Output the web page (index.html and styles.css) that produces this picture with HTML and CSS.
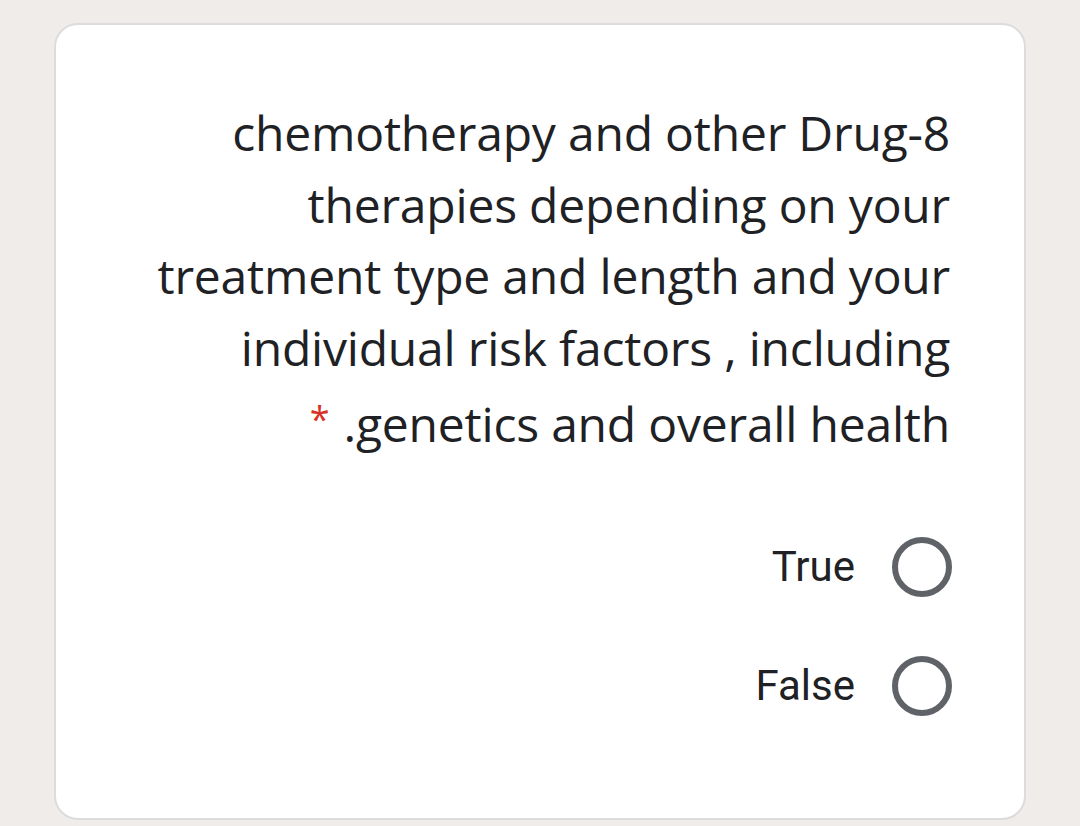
FILE: index.html
```html
<!DOCTYPE html>
<html lang="en">
<head>
<meta charset="utf-8">
<link rel="stylesheet" href="styles.css">
</head>
<body>
<div class="card">
  <div class="question">
    chemotherapy and other Drug-8<br>
    therapies depending on your<br>
    treatment type and length and your<br>
    individual risk factors , including<br>
    <span class="req">*</span> .genetics and overall health
  </div>
  <div class="options">
    <label class="option"><span class="label">True</span><span class="radio"></span></label>
    <label class="option"><span class="label">False</span><span class="radio"></span></label>
  </div>
</div>
</body>
</html>
```

FILE: styles.css
```css
html, body {
  margin: 0;
  padding: 0;
  background: #efecea;
}
body {
  padding: 23px 54px 0 54px;
  height: 826px;
  box-sizing: border-box;
  overflow: hidden;
}
.card {
  background: #fff;
  border: 2px solid #dcdcde;
  border-radius: 24px;
  height: 797px;
  box-sizing: border-box;
  padding: 72px 74px 0 20px;
}
.question {
  font-family: "Open Sans", sans-serif;
  font-size: 48px;
  line-height: 71.5px;
  letter-spacing: -0.2px;
  color: #202124;
  text-align: right;
}
.req {
  color: #d93025;
  font-size: 36px;
  vertical-align: 10px;
  margin-right: 2px;
}
.options {
  margin-top: 77px;
  margin-right: -2px;
  display: flex;
  flex-direction: column;
  align-items: flex-end;
  gap: 59px;
}
.option {
  display: flex;
  align-items: center;
  gap: 37px;
  height: 60px;
}
.label {
  font-family: Roboto, sans-serif;
  font-size: 42px;
  color: #202124;
}
.radio {
  width: 60px;
  height: 60px;
  box-sizing: border-box;
  border: 6px solid #5f6368;
  border-radius: 50%;
}
```
